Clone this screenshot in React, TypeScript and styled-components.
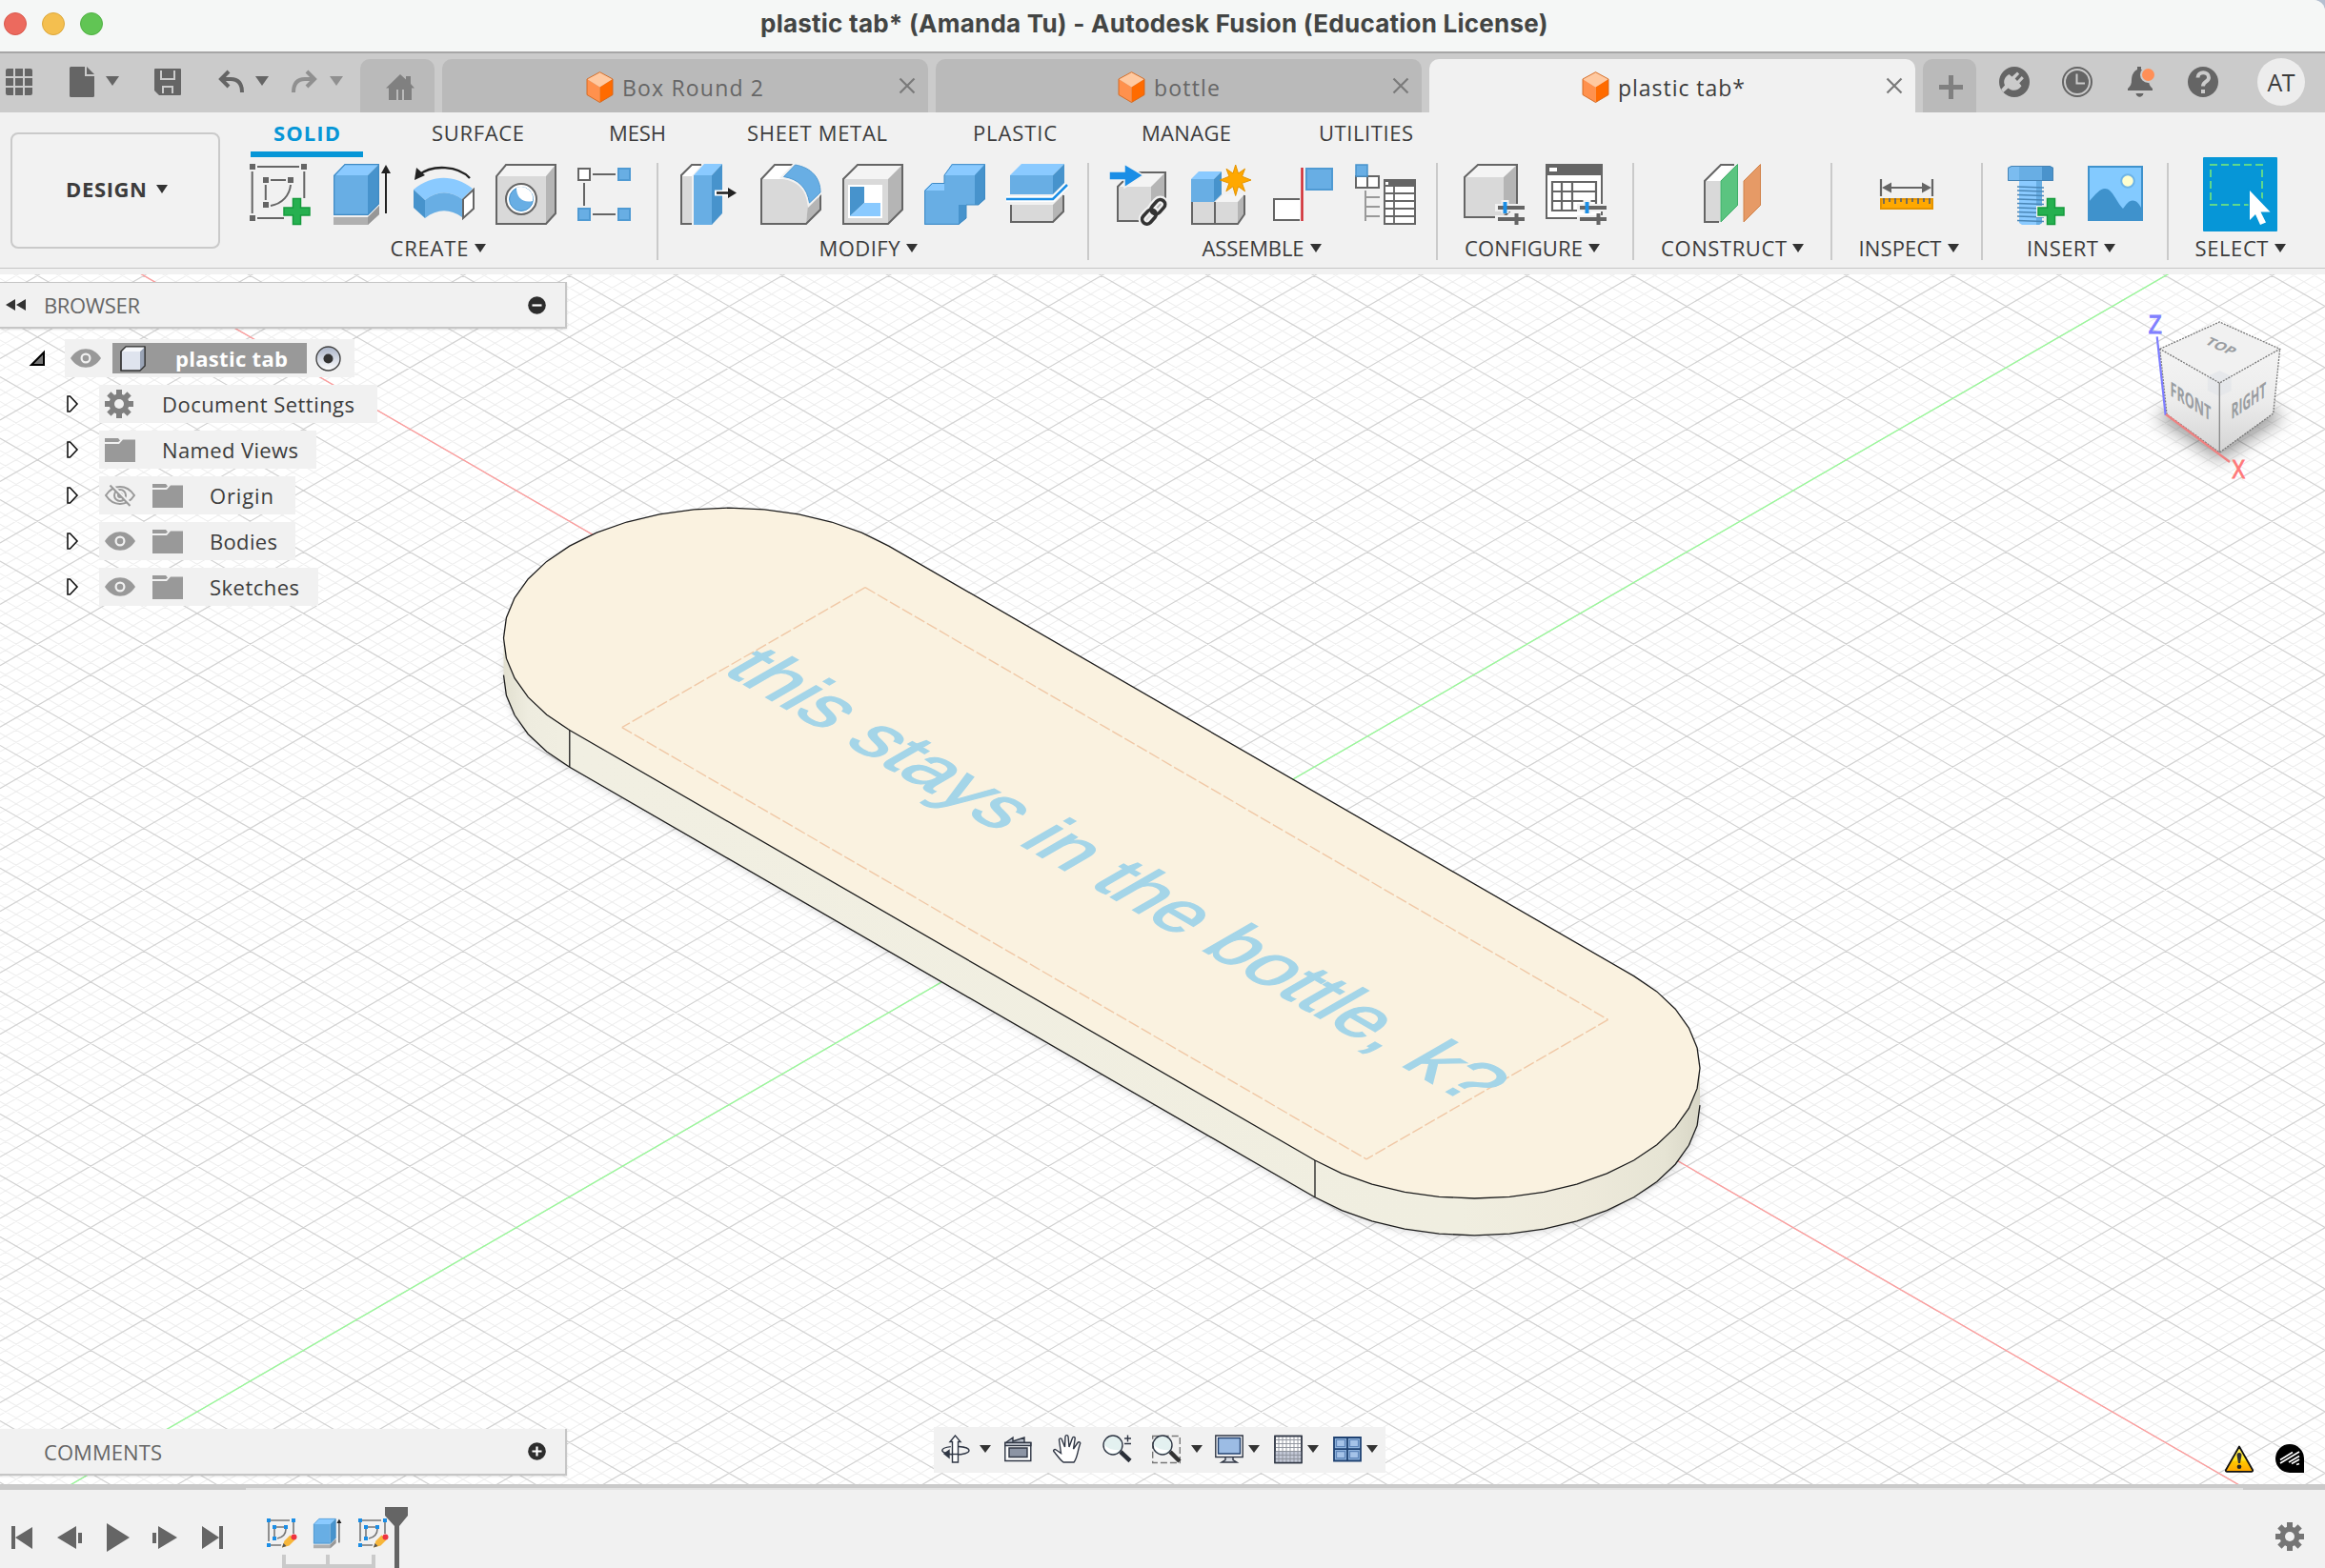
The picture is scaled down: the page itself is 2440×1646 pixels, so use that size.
import React, { useLayoutEffect, useRef, useState } from "react";
import styled, { createGlobalStyle, css } from "styled-components";

const UI_FONT = '"Open Sans", "Noto Sans", sans-serif';

const GlobalStyle = createGlobalStyle`
  * { box-sizing: border-box; }
  html, body { margin: 0; padding: 0; }
  body { background: #b4bfd0; font-family: ${UI_FONT}; color: #3c3c3c; overflow: hidden; }
  svg { display: block; flex: none; overflow: visible; }
`;

/* ---------- text ---------- */

const TextBox = styled.span<{ $w: number; $size?: number; $weight?: number; $color?: string; $font?: string }>`
  display: block;
  flex: none;
  width: ${(p) => p.$w}px;
  white-space: pre;
  font-family: ${(p) => p.$font ?? UI_FONT};
  font-size: ${(p) => p.$size ?? 22}px;
  font-weight: ${(p) => p.$weight ?? 400};
  color: ${(p) => p.$color ?? "#3c3c3c"};
  line-height: 26px;
`;

interface LabelProps {
  children: string;
  w: number;
  size?: number;
  weight?: number;
  color?: string;
  font?: string;
}

/* A label whose tracking is adjusted so that it fills its column. */
function Label({ children, w, size, weight, color, font }: LabelProps) {
  const inner = useRef<HTMLSpanElement>(null);
  const [tracking, setTracking] = useState(0);
  useLayoutEffect(() => {
    if (!inner.current || children.length < 2) return;
    const natural = inner.current.getBoundingClientRect().width;
    setTracking((w - natural) / (children.length - 1));
  }, []);
  return (
    <TextBox $w={w} $size={size} $weight={weight} $color={color} $font={font}>
      <span ref={inner} style={{ letterSpacing: `${tracking}px` }}>
        {children}
      </span>
    </TextBox>
  );
}

/* ---------- window frame ---------- */

const Window = styled.div`
  display: flex;
  flex-direction: column;
  width: 2440px;
  height: 1646px;
  border-top-right-radius: 12px;
  overflow: hidden;
  background: #f1f1f1;
`;

const TitleBar = styled.header`
  display: flex;
  align-items: center;
  height: 56px;
  flex: none;
  padding: 0 0 4px 4px;
  background: #f5f7f6;
  border-bottom: 2px solid #a6a6a6;
`;

const Lights = styled.div`
  display: flex;
  gap: 16px;
  width: 794px;
`;

const Light = styled.i<{ $c: string; $edge: string }>`
  width: 24px;
  height: 24px;
  border-radius: 50%;
  background: ${(p) => p.$c};
  border: 1px solid ${(p) => p.$edge};
`;

/* ---------- document tab bar ---------- */

const TabBar = styled.nav`
  display: flex;
  align-items: flex-end;
  height: 62px;
  flex: none;
  background: #cbcbcb;
`;

const QuickTools = styled.div`
  display: flex;
  align-items: center;
  height: 62px;
  width: 378px;
  flex: none;
  padding-bottom: 2px;
`;

const Push = styled.div<{ $ml?: number; $mt?: number }>`
  flex: none;
  margin-left: ${(p) => p.$ml ?? 0}px;
  margin-top: ${(p) => p.$mt ?? 0}px;
`;

const Caret = styled.i<{ $w?: number; $h?: number; $c?: string }>`
  display: block;
  flex: none;
  width: 0;
  height: 0;
  border-left: ${(p) => (p.$w ?? 12) / 2}px solid transparent;
  border-right: ${(p) => (p.$w ?? 12) / 2}px solid transparent;
  border-top: ${(p) => p.$h ?? 9}px solid ${(p) => p.$c ?? "#333"};
`;

const DocTab = styled.div<{ $w: number; $ml?: number; $active?: boolean; $pad?: number }>`
  display: flex;
  align-items: center;
  width: ${(p) => p.$w}px;
  height: 56px;
  margin-left: ${(p) => p.$ml ?? 0}px;
  padding-top: 3px;
  padding-left: ${(p) => p.$pad ?? 0}px;
  border-radius: 10px 10px 0 0;
  background: ${(p) => (p.$active ? "#f1f1f1" : "#bababa")};
`;

const StatusTools = styled.div`
  display: flex;
  align-items: center;
  height: 62px;
  padding-bottom: 2px;
  padding-left: 24px;
  gap: 34px;
`;

const Avatar = styled.div`
  display: flex;
  justify-content: center;
  align-items: center;
  width: 50px;
  height: 50px;
  margin-left: 7px;
  border-radius: 50%;
  background: #ededed;
`;

/* ---------- ribbon ---------- */

const Ribbon = styled.section`
  display: flex;
  height: 170px;
  flex: none;
  background: #f1f1f1;
`;

const RibbonFrame = styled.div`
  display: flex;
  width: 2440px;
  height: 164px;
  border-bottom: 1px solid #c6c6c6;
`;

const Workspace = styled.button`
  display: flex;
  align-items: center;
  width: 220px;
  height: 122px;
  margin: 21px 11px 0 11px;
  padding: 0 0 4px 56px;
  gap: 10px;
  border: 2px solid #cacaca;
  border-radius: 8px;
  background: #f2f2f2;
`;

const RibbonMain = styled.div`
  display: flex;
  flex-direction: column;
`;

const RibbonTabs = styled.div`
  display: flex;
  height: 47px;
`;

const RibbonTab = styled.div<{ $ml: number; $on?: boolean }>`
  display: flex;
  padding-top: 8px;
  margin-left: ${(p) => p.$ml}px;
  ${(p) =>
    p.$on &&
    css`
      padding: 8px 24px 0;
      border-bottom: 6px solid #0696d7;
    `}
`;

const Groups = styled.div`
  display: flex;
  margin-top: 6px;
`;

const Group = styled.div<{ $w: number; $last?: boolean }>`
  display: flex;
  flex-direction: column;
  align-items: center;
  width: ${(p) => p.$w}px;
  height: 102px;
  padding-top: 1px;
  border-right: ${(p) => (p.$last ? "0" : "2px solid #cacaca")};
`;

const IconRow = styled.div`
  display: flex;
  align-items: center;
  gap: 22px;
  height: 64px;
`;

const GroupLabel = styled.div<{ $nudge: number }>`
  display: flex;
  align-items: center;
  gap: 6px;
  margin-top: 11px;
  margin-left: ${(p) => p.$nudge * 2}px;
`;

/* ---------- canvas ---------- */

const Canvas = styled.main`
  position: relative;
  height: 1270px;
  flex: none;
  background: #fff;
  overflow: hidden;
`;

const Panel = styled.div<{ $top: number; $line?: boolean }>`
  position: absolute;
  left: 0;
  top: ${(p) => p.$top}px;
  display: flex;
  align-items: center;
  width: 595px;
  height: 49px;
  padding: 0 20px 0 6px;
  background: #f1f1f1;
  border-right: 2px solid #c6c6c6;
  border-bottom: 2px solid #c6c6c6;
  border-top: ${(p) => (p.$line ? "1px solid #c6c6c6" : "0")};
  box-shadow: 0 1px 2px rgba(0, 0, 0, 0.12);
`;

const PanelTitle = styled.div<{ $pl: number }>`
  flex: 1;
  padding-left: ${(p) => p.$pl}px;
`;

const Tree = styled.div`
  position: absolute;
  left: 0;
  top: 68px;
  display: flex;
  flex-direction: column;
  gap: 8px;
`;

const TreeRow = styled.div<{ $pl: number }>`
  display: flex;
  align-items: center;
  height: 40px;
  padding-left: ${(p) => p.$pl}px;
`;

const TreeCell = styled.div<{ $w: number; $ml: number }>`
  display: flex;
  align-items: center;
  width: ${(p) => p.$w}px;
  height: 40px;
  margin-left: ${(p) => p.$ml}px;
  padding-left: 6px;
  background: #f1f1f1;
`;

const Selected = styled.div`
  display: flex;
  align-items: center;
  width: 204px;
  height: 32px;
  margin: 0 9px 0 12px;
  padding-left: 8px;
  gap: 31px;
  background: #999;
`;

const NavBar = styled.div`
  position: absolute;
  left: 980px;
  top: 1210px;
  display: flex;
  align-items: center;
  width: 474px;
  height: 48px;
  padding: 0 0 2px 8px;
  background: #f1f1f1;
`;

const Status = styled.div`
  position: absolute;
  right: 22px;
  bottom: 12px;
  display: flex;
  align-items: flex-end;
  gap: 22px;
`;

/* ---------- timeline ---------- */

const Timeline = styled.footer`
  display: flex;
  height: 88px;
  flex: none;
  padding: 0 22px 0 12px;
  border-top: 4px solid #cacaca;
  justify-content: space-between;
  background: linear-gradient(90deg, #cacaca 258px, #e2e2e2 258px, #e2e2e2 2354px, #cacaca 2354px) 0 0 / 100% 2px no-repeat #f1f1f1;
`;

const Transport = styled.div<{ $h: number }>`
  display: flex;
  align-items: center;
  height: ${(p) => p.$h}px;
`;

/* ---------- icons ---------- */

const BLUE = "#68aee4";
const BLUE_TOP = "#8acaff";
const BLUE_SIDE = "#4793cc";
const INK = "#656565";
const GREY = "#d9d9d9";
const GREY_SIDE = "#b5b5b5";

const Tool = ({ children }: { children: React.ReactNode }) => (
  <svg width="64" height="64" viewBox="0 0 64 64" fill="none">
    {children}
  </svg>
);

const Plus = () => (
  <path d="M45.500 36.500h8v9.500h9.500v8h-9.500v9.500h-8v-9.500h-9.500v-8h9.500z" fill="#26b050" stroke="#159a3c" strokeWidth="1.500" />
);

const GreyCube = ({ x0 = 1, y0 = 13, x1 = 53, yb = 63, xr = 63, yt = 1, ys = 52 }) => (
  <>
    <path d={`M${x0} ${yb}V${y0}H${x1}V${yb}z`} fill={GREY} />
    <path d={`M${x0} ${y0}L${x0 + xr - x1} ${yt}H${xr}L${x1} ${y0}z`} fill="#f4f4f4" />
    <path d={`M${x1} ${y0}L${xr} ${yt}V${ys}L${x1} ${yb}z`} fill={GREY_SIDE} />
    <path d={`M${x0} ${yb}V${y0}L${x0 + xr - x1} ${yt}H${xr}V${ys}L${x1} ${yb}z`} stroke={INK} strokeWidth="2" />
  </>
);

const SketchIcon = () => (
  <Tool>
    <path d="M8 3h44M2.700 8v44M57.300 8v28M8 57h28M22 17h16M16.800 22v16M43 22c-1 11-9 20-21 22" stroke={INK} strokeWidth="2" />
    <path d="M0 0h6v6H0zM54 0h6v6h-6zM0 54h6v6H0zM14 14h6v6h-6zM40 14h6v6h-6zM14 40h6v6h-6z" fill={INK} />
    <Plus />
  </Tool>
);

const ExtrudeBody = () => (
  <>
    <path d="M2 56h36l12-12v9L38 64H2z" fill="#b0b0b0" />
    <path d="M38 56l12-12v9L38 64z" fill="#979797" />
    <path d="M2 12h36v42H2z" fill={BLUE} />
    <path d="M2 12L14 0h36L38 12z" fill={BLUE_TOP} />
    <path d="M38 12L50 0v42L38 54z" fill={BLUE_SIDE} />
    <path d="M2.700 12.500L14 .7h35.300V42L38 53.300H2.700z" stroke="#3f8ac4" strokeWidth="1.200" />
    <path d="M57 8v44" stroke="#222" strokeWidth="2" />
    <path d="M52 10l5-9 5 9z" fill="#222" />
  </>
);

const ExtrudeIcon = () => (
  <Tool>
    <ExtrudeBody />
  </Tool>
);

const RevolveIcon = () => (
  <Tool>
    <path d="M59 15C47 2 20 0 5 12" stroke="#222" strokeWidth="2.400" />
    <path d="M1 17L3 4l9 8z" fill="#222" />
    <path d="M52 37L63 27v20L52 57z" fill="#fff" stroke={INK} strokeWidth="2" />
    <path d="M0 27c20-16 42-16 62-1L51 37c-13-9-26-9-39 1z" fill={BLUE_TOP} />
    <path d="M12 38c13-10 26-10 39-1v19c-13-9-26-9-39 1z" fill={BLUE} />
    <path d="M0 27l12 11v19L0 46z" fill={BLUE_SIDE} />
  </Tool>
);

const HoleIcon = () => (
  <Tool>
    <GreyCube />
    <circle cx="27" cy="37" r="16" fill="#fff" stroke={INK} strokeWidth="2" />
    <circle cx="27" cy="37" r="12.500" fill={BLUE} stroke="#4793cc" />
    <path d="M22 25.500c0 10 7 16 17 13.500a12.500 12.500 0 0 0-17-14z" fill="#fff" />
  </Tool>
);

const PatternIcon = () => (
  <Tool>
    <path d="M16 11h24M7 20v24M16 53h24" stroke={INK} strokeWidth="2" />
    <path d="M1 5h12v12H1z" fill="#fff" stroke={INK} strokeWidth="2" />
    <path d="M43 5h12v12H43zM1 47h12v12H1zM43 47h12v12H43z" fill={BLUE} stroke="#4f9ad3" strokeWidth="2" />
  </Tool>
);

const PressPullIcon = () => (
  <Tool>
    <path d="M3 13h11v50H3z" fill={GREY} />
    <path d="M3 13L14 1h10L14 13z" fill="#fff" />
    <path d="M14 63H3V12L14 1h10" stroke={INK} strokeWidth="2" />
    <path d="M16 12h19v52H16z" fill={BLUE} />
    <path d="M16 12L27 0h19L35 12z" fill={BLUE_TOP} />
    <path d="M35 12L46 0v52L35 64z" fill={BLUE_SIDE} />
    <path d="M38 30.500h16" stroke="#fff" strokeWidth="6" />
    <path d="M40 30.500h14" stroke="#222" strokeWidth="2.600" />
    <path d="M52 25l9 5.500-9 5.500z" fill="#222" />
  </Tool>
);

const FilletIcon = () => (
  <Tool>
    <path d="M1 63V16h22c16 2 26 12 27 27l-2 20z" fill={GREY} />
    <path d="M1 16L15 1h19l-9 15z" fill="#fff" />
    <path d="M50 42l13-8v14L48 63z" fill={GREY_SIDE} />
    <path d="M34 1H15L1 16v47h47l15-15V32" stroke={INK} strokeWidth="2" />
    <path d="M23 14L36 0c18 3 28 14 28 30L51 43C49 25 39 16 23 14z" fill={BLUE} stroke="#f1f1f1" strokeWidth="3" />
    <path d="M24.500 13.500L36.500 1C54 4 63 15 63 30L51.500 41C49 25 40 16 24.500 13.500z" fill={BLUE} stroke="#4f9ad3" />
  </Tool>
);

const ShellIcon = () => (
  <Tool>
    <GreyCube y0={16} x1={48} ys={48} />
    <path d="M6 22h36v35H6z" fill="#fff" />
    <path d="M8 24h15v17L8 55z" fill="#4793cc" />
    <path d="M23 41h17v14H8z" fill={BLUE_TOP} />
  </Tool>
);

const CombineIcon = () => (
  <Tool>
    <path d="M0 28l8-8h13V12L29 0h35v37l-7 6H44v14l-8 7H0z" fill={BLUE} />
    <path d="M0 28l8-8h13v8zM21 12L29 0h35L53 12z" fill={BLUE_TOP} />
    <path d="M53 12L64 0v37l-7 6h-4zM36 43h8v14l-8 7z" fill={BLUE_SIDE} />
    <path d="M.7 28.300L8.500 20.500H21V12L29.300.7h34v36L57 43H44v14l-8 6.300H.7z" stroke="#3f8ac4" />
  </Tool>
);

const SplitIcon = () => (
  <Tool>
    <path d="M4 43h45v18H4z" fill={GREY} />
    <path d="M49 43l11-11v17L49 61z" fill={GREY_SIDE} />
    <path d="M5 43v18h44l11-11V33" stroke={INK} strokeWidth="2" />
    <path d="M4 12h45v20H4z" fill={BLUE} />
    <path d="M4 12L16 0h45L49 12z" fill={BLUE_TOP} />
    <path d="M49 12L61 0v20L49 32z" fill={BLUE_SIDE} />
    <path d="M0 37h49l15-15" stroke="#fff" strokeWidth="6" />
    <path d="M0 37h49l15-15" stroke="#1b8ee6" strokeWidth="2.600" />
  </Tool>
);

const InsertComponentIcon = () => (
  <Tool>
    <GreyCube x0={9} y0={24} x1={44} yb={60} xr={59} yt={9} ys={45} />
    <path d="M0 8h16V0l20 12-20 13v-8H0z" fill="#1b8ee6" stroke="#f1f1f1" strokeWidth="1.500" />
    <g transform="rotate(-48 47 50)" fill="none">
      <g stroke="#f1f1f1" strokeWidth="8">
        <rect x="31" y="45" width="17" height="10" rx="5" />
        <rect x="45" y="45" width="17" height="10" rx="5" />
      </g>
      <g stroke="#333" strokeWidth="3.600">
        <rect x="31" y="45" width="17" height="10" rx="5" />
        <rect x="45" y="45" width="17" height="10" rx="5" />
      </g>
    </g>
  </Tool>
);

const NewComponentIcon = () => (
  <Tool>
    <path d="M25 40l8-8h23v20L49 63z" fill={GREY_SIDE} />
    <path d="M25 40l8-8h23l-7 8z" fill="#f4f4f4" />
    <path d="M1 40h48v23H1z" fill={GREY} />
    <path d="M1 40v23h48l7-10V33M25 40v23" stroke={INK} strokeWidth="2" />
    <path d="M0 16h24v24H0z" fill={BLUE} />
    <path d="M0 16l8-8h24l-8 8z" fill={BLUE_TOP} />
    <path d="M24 16l8-8v24l-8 8z" fill={BLUE_SIDE} />
    <path
      d="M46.700 1l2.800 9 7-4.800-3 8L63 17l-9.500 3.300 3 8.500-7-5-2.800 9.700-2.800-9.700-7 5 3-8.500L30.500 17l9.500-3.800-3-8 7 4.800z"
      fill="#ffa800"
      stroke="#e59400"
    />
  </Tool>
);

const JointIcon = () => (
  <Tool>
    <path d="M28 37H1v22h27" fill="#fff" stroke={INK} strokeWidth="2" />
    <path d="M30.500 4v56" stroke="#d0252c" strokeWidth="2.400" />
    <path d="M35 5h27v22H35z" fill={BLUE} stroke="#4f9ad3" strokeWidth="2" />
  </Tool>
);

const BomIcon = () => (
  <Tool>
    <path d="M1 13h24v12H1zM13 13v12" fill="#fff" stroke={INK} strokeWidth="2" />
    <path d="M1 1h12v12H1z" fill={BLUE} stroke="#4793cc" strokeWidth="1.500" />
    <path d="M11 28v32M11 35h15M11 45h15M11 55h15" stroke="#999" strokeWidth="2" />
    <path d="M31 17h32v46H31z" fill="#fff" stroke={INK} strokeWidth="2" />
    <path d="M30 16h34v8H30z" fill={INK} />
    <path d="M31 31h32M31 39h32M31 47h32M31 55h32M41 24v38" stroke={INK} strokeWidth="1.800" />
    <path d="M32 19h3v3h-3z" fill="#fff" />
  </Tool>
);

const Sliders = () => (
  <>
    <path d="M33 46h31M33 58h31M43.500 38v14" stroke="#f1f1f1" strokeWidth="8" />
    <path d="M36 46h28M36 58h28M55.500 52v12" stroke={INK} strokeWidth="4" />
    <path d="M43.500 40v12" stroke="#1b8ee6" strokeWidth="4" />
  </>
);

const ConfigureIcon = () => (
  <Tool>
    <GreyCube y0={14} x1={42} xr={56} yb={56} ys={42} />
    <Sliders />
  </Tool>
);

const ConfigTableIcon = () => (
  <Tool>
    <path d="M1 1h58v56H1z" fill="#fff" stroke={INK} strokeWidth="2" />
    <path d="M0 0h60v12H0z" fill={INK} />
    <path d="M4 4h8v4H4z" fill="#fff" />
    <path d="M7 19h46v30H7zM7 29h46M7 39h46M17 19v30M28 19v30" stroke={INK} strokeWidth="2.200" />
    <Sliders />
  </Tool>
);

const ConstructIcon = () => (
  <Tool>
    <path d="M3 18h16v43H3z" fill={GREY} />
    <path d="M3 18L20 1h14L19 18z" fill="#fff" />
    <path d="M18 61H3V18L20 1h14" stroke={INK} strokeWidth="2" />
    <path d="M20 18L37.500.5v43L20 61z" fill="#5bc480" stroke="#3fae68" />
    <path d="M44 18L61.500.5v43L44 61z" fill="#e69a66" stroke="#d0824a" />
  </Tool>
);

const InspectIcon = () => (
  <Tool>
    <path d="M5 16v18M59 16v18M9 25h46" stroke={INK} strokeWidth="2.200" />
    <path d="M6 25l10-5.500v11zM58 25l-10-5.500v11z" fill={INK} />
    <path d="M5 37h54v10H5z" fill="#ffa800" stroke="#e59400" strokeWidth="2" />
    <path d="M8 36v6M14 36v4M20 36v6M26 36v4M32 36v6M38 36v4M44 36v6M50 36v4M56 36v6" stroke={INK} strokeWidth="1.800" />
  </Tool>
);

const BoltIcon = () => (
  <Tool>
    <path d="M16 18h24v44l-3 2H19l-3-2z" fill={BLUE_TOP} />
    <path d="M34 18h6v44l-3 2h-3z" fill={BLUE} />
    <path d="M14 24l28 1M14 28l28 1M14 32.500l28 1M14 37l28 1M14 41.500l28 1M14 46l28 1M14 50.500l28 1M14 55l28 1M14 59.500l28 1" stroke="#4a87b8" strokeWidth="1.700" />
    <path d="M4 4l4-2h40l4 2v14H4z" fill={BLUE} />
    <path d="M40 2h8l4 2v14H40z" fill="#4a93cc" />
    <path d="M4 4l4-2h8v16H4z" fill="#7bbcf0" />
    <path d="M4.500 4.500L8 2.500h40l3.500 2v13H4.500z" stroke="#4683b4" />
    <path d="M34 44h9v-9h13v9h8v12h-8v8H43v-8h-9z" fill="#f1f1f1" />
    <Plus />
  </Tool>
);

const PictureIcon = () => (
  <Tool>
    <path d="M3 3h56v56H3z" fill="#83caff" />
    <path d="M3 40c8-9 12-14 17-14 8 0 12 14 19 21 4-5 6-8.500 10-8.500 5 0 7 4 10 9V59H3z" fill="#3f92cc" />
    <circle cx="44" cy="18" r="6.800" fill="#ffffd0" stroke="#6db4e8" strokeWidth="2" />
    <path d="M3 3h56v56H3z" stroke="#3f92cc" strokeWidth="2" />
  </Tool>
);

const SelectIcon = () => (
  <svg width="78" height="78" viewBox="0 0 78 78" fill="none">
    <rect width="78" height="78" rx="1" fill="#0696d7" />
    <rect x="8" y="8" width="54" height="42" stroke="#5fd88c" strokeWidth="2" strokeDasharray="8 4" strokeDashoffset="1" />
    <path d="M46 32l20 14v12l-17 8z" fill="#0696d7" />
    <path d="M49 35l21.500 22.500H60.500l5.500 11-6 2.500-5-11-6 6z" fill="#fff" />
  </svg>
);

const DocCube = () => (
  <svg width="29" height="33" viewBox="0 0 29 33">
    <path d="M14.500.5L28 8 14.500 16.500 1 8z" fill="#ffc9a0" />
    <path d="M1 8l13.500 8.500v16L1 24.500z" fill="#ff914d" />
    <path d="M28 8l-13.500 8.500v16L28 24.500z" fill="#ff6b00" />
    <path d="M14.500.7L28 8v16.500l-13.500 8L1 24.500V8z" fill="none" stroke="#d2651c" strokeWidth=".9" />
  </svg>
);

const Close = () => (
  <svg width="18" height="16" viewBox="0 0 18 16">
    <path d="M1.500.5l15 15M16.500.5l-15 15" stroke="#7a7a7a" strokeWidth="2.200" />
  </svg>
);

const GearIcon = ({ size = 30, color = "#808080" }) => (
  <svg width={size} height={size} viewBox="-15 -15 30 30">
    <g fill={color}>
      {[0, 45, 90, 135].map((a) => (
        <rect key={a} x="-3" y="-15" width="6" height="30" transform={`rotate(${a})`} />
      ))}
      <circle r="10.500" />
    </g>
    <circle r="5" fill="#f1f1f1" />
  </svg>
);

const EyeIcon = () => (
  <svg width="32" height="20" viewBox="0 0 32 20">
    <path d="M0 10C8-3 24-3 32 10 24 23 8 23 0 10z" fill="#999" />
    <circle cx="16" cy="10" r="4.400" fill="none" stroke="#f1f1f1" strokeWidth="2.200" />
  </svg>
);

const EyeOffIcon = () => (
  <svg width="32" height="24" viewBox="0 -2 32 24" fill="none" stroke="#999" strokeWidth="2">
    <path d="M1 10C9-2 23-2 31 10 23 22 9 22 1 10z" />
    <circle cx="16" cy="10" r="6" />
    <circle cx="16" cy="10" r="2" />
    <path d="M7 -1l21 21" stroke="#f1f1f1" strokeWidth="3" />
    <path d="M5.500 -.5L26.500 21" />
  </svg>
);

const FolderIcon = () => (
  <svg width="32" height="26" viewBox="0 0 32 26">
    <path d="M0 1h14l2 2.500-2 1.500H0zM0 7h15l4-4.500h13V26H0z" fill="#999" />
  </svg>
);

const ArrowIcon = () => (
  <svg width="12" height="18" viewBox="0 0 12 18">
    <path d="M1 1h2.500L11 9l-7.500 8H1z" fill="#fff" stroke="#111" strokeWidth="1.600" />
  </svg>
);

/* ---------- model view ---------- */

const STEP = 111.667;
const SLOPE = 0.57735;
const ORIGIN = { x: 1211.8, y: 613.8 };

function gridLines(divisions: number, skip: number) {
  const out: string[] = [];
  const gap = (STEP * SLOPE) / divisions;
  const reach = Math.ceil(2100 / gap);
  for (let i = -reach; i <= reach; i++) {
    if (skip && i % skip === 0) continue;
    const y = ORIGIN.y + i * gap;
    const left = -ORIGIN.x * SLOPE;
    const right = (2440 - ORIGIN.x) * SLOPE;
    out.push(`M0 ${(y + left).toFixed(1)}L2440 ${(y + right).toFixed(1)}M0 ${(y - left).toFixed(1)}L2440 ${(y - right).toFixed(1)}`);
  }
  return out.join("");
}

const RX = 236.7;
const RY = 136.7;
const THICK = 38.8;
const CAP_A = { x: 765.2, y: 381.8 };
const CAP_B = { x: 1547.3, y: 833.3 };

function arc(c: { x: number; y: number }, from: number, to: number, dy = 0) {
  const pts: string[] = [];
  const dir = to > from ? 9 : -9;
  for (let t = from; dir > 0 ? t <= to : t >= to; t += dir) {
    const r = (t * Math.PI) / 180;
    pts.push(`${(c.x + RX * Math.cos(r)).toFixed(1)} ${(c.y + RY * Math.sin(r) + dy).toFixed(1)}`);
  }
  return pts.join("L");
}

const TOP_FACE = `M${arc(CAP_B, -45, 135)}L${arc(CAP_A, 135, 315)}z`;
const SIDE = `M${arc(CAP_B, 0, 135, THICK)}L${arc(CAP_A, 135, 180, THICK)}L${arc(CAP_A, 180, 135)}L${arc(CAP_B, 135, 0)}z`;
const SIDE_EDGE = `M${arc(CAP_B, 0, 135, THICK)}L${arc(CAP_A, 135, 180, THICK)}`;

const Scene = () => (
  <svg width="2440" height="1270" viewBox="0 0 2440 1270">
    <defs>
      <linearGradient id="side" gradientUnits="userSpaceOnUse" x1="529" x2="1784" y1="0" y2="0">
        <stop offset="0" stopColor="#e2e0d0" />
        <stop offset=".02" stopColor="#eeecdf" />
        <stop offset=".06" stopColor="#f1efe2" />
        <stop offset=".8" stopColor="#f0eee0" />
        <stop offset=".9" stopColor="#eeeadb" />
        <stop offset=".97" stopColor="#e6e4d4" />
        <stop offset="1" stopColor="#d8d6c6" />
      </linearGradient>
      <linearGradient id="cubeFace" x1="0" x2="0" y1="0" y2="1">
        <stop offset="0" stopColor="#f4f4f4" />
        <stop offset=".5" stopColor="#ececec" />
        <stop offset="1" stopColor="#d4d4d4" />
      </linearGradient>
      <filter id="soft" x="-20%" y="-20%" width="140%" height="140%">
        <feGaussianBlur stdDeviation="4" />
      </filter>
      <filter id="softer" x="-60%" y="-60%" width="220%" height="220%">
        <feGaussianBlur stdDeviation="9" />
      </filter>
    </defs>
    <path d={gridLines(5, 5)} stroke="#efefef" strokeWidth="1.100" fill="none" />
    <path d={gridLines(1, 0)} stroke="#d2d2d2" strokeWidth="1.200" fill="none" />
    <path d={`M0 ${ORIGIN.y - ORIGIN.x * SLOPE}L2440 ${ORIGIN.y + (2440 - ORIGIN.x) * SLOPE}`} stroke="#ff9c9c" strokeWidth="1.300" />
    <path d={`M0 ${ORIGIN.y + ORIGIN.x * SLOPE}L2440 ${ORIGIN.y - (2440 - ORIGIN.x) * SLOPE}`} stroke="#98fb98" strokeWidth="1.300" />

    <path d={SIDE} fill="#000" opacity=".16" filter="url(#soft)" transform="translate(1 2)" />
    <path d={SIDE} fill="url(#side)" />
    <path d={SIDE_EDGE} fill="none" stroke="#1c1c1c" strokeWidth="1.300" />
    <path d={TOP_FACE} fill="#faf2e0" stroke="#1c1c1c" strokeWidth="1.300" />
    <path d="M597.800 478.400v38.800M1380 930v38.800" stroke="#1c1c1c" strokeWidth="1.300" />
    <path d="M908 328.700L652.700 475.600M908 328.700L1687.600 782.300M652.700 475.600L1434 928.800M1687.600 782.300L1434 928.800" stroke="#f0c8a6" strokeWidth="1.400" strokeDasharray="12 3" fill="none" />
    <text
      transform="matrix(.866 .502 -.866 .5 756.300 416.600)"
      fontFamily='"Liberation Sans", Arial, sans-serif'
      fontSize="80.800"
      fill="#a4d5e8"
      stroke="#a4d5e8"
      strokeWidth="1.600"
    >
      this stays in the bottle, k?
    </text>

    <path d="M2262 150l67 46 68-46-20-14h-90z" fill="#000" opacity=".38" filter="url(#softer)" />
    <path d="M2266.700 78.300l62.600-28.300 63.400 28.300-63.400 35.700z" fill="#f1f1f1" />
    <path d="M2266.700 78.300l62.600 35.700v73l-55.300-40z" fill="url(#cubeFace)" />
    <path d="M2392.700 78.300l-63.400 35.700v73l56.400-41z" fill="url(#cubeFace)" />
    <path d="M2329.300 101l12.500 6v15l-12.500 6-12.500-6v-15z" fill="#dfe3e8" opacity=".6" />
    <path d="M2266.700 78.300l62.600-28.300 63.400 28.300-63.400 35.700zM2266.700 78.300l7.300 68.700 55.300 40 56.400-41 7-67.700" fill="none" stroke="#777" strokeWidth="1.300" strokeDasharray="2 1.200" />
    <path d="M2329.300 114v73" stroke="#888" strokeWidth="1.300" />
    <path d="M2263.700 65.300l9 82.700" stroke="#7c7cff" strokeWidth="2.200" />
    <path d="M2273 147l67 50" stroke="#f08080" strokeWidth="2.200" />
    <g fill="#9a9da1" fontFamily={UI_FONT} fontWeight="700" fontSize="20">
      <text transform="matrix(.63 .4 0 1.05 2277.500 127)">FRONT</text>
      <text transform="matrix(.6 -.4 0 1.1 2341.500 152.500)">RIGHT</text>
      <text transform="matrix(.72 .32 -.5 .48 2313 72.500)">TOP</text>
    </g>
    <g fontFamily='"Liberation Sans", Arial, sans-serif' fontSize="28" textAnchor="middle" strokeWidth="1">
      <text x="2261.700" y="62" fill="#8080ff" stroke="#8080ff" textLength="14" lengthAdjust="spacingAndGlyphs">Z</text>
      <text x="2349.300" y="213.500" fill="#ff7878" stroke="#ff7878" textLength="14" lengthAdjust="spacingAndGlyphs">X</text>
    </g>
  </svg>
);

/* ---------- navigation icons ---------- */

const Nav = ({ children }: { children: React.ReactNode }) => (
  <svg width="30" height="30" viewBox="0 0 30 30" fill="none" stroke="#2f3644" strokeWidth="1.400">
    {children}
  </svg>
);

const NavIcons = () => (
  <NavBar>
    <Nav>
      <path d="M18 12.500c6 .3 11 2 11 4.200 0 2.500-6 4.300-14 4.300S.8 19 .8 16.600c0-2 4-3.500 9-4" />
      <path d="M14.500 1L9 7.500h2.500V29h6V7.500H20z" fill="#fff" />
      <path d="M3 20l5-3.500V24z" fill="#2f3644" />
      <path d="M8 20.500h9" />
    </Nav>
    <Push $ml={10}><Caret $h={8} /></Push>
    <Push $ml={14}>
      <Nav>
        <path d="M2 8L9 3v4l12-4v5" fill="#b7bdc8" />
        <path d="M.8 8.500h27v19H.8z" fill="#fff" />
        <path d="M.8 8.500h27v3H.8z" fill="#d8dce4" />
        <path d="M5 14h19v9.500H5z" fill="#8c94a4" />
      </Nav>
    </Push>
    <Push $ml={21}>
      <Nav>
        <path
          d="M11 29C8 27 3 20 .8 17.500c-.6-1.500 1-2.500 2.500-1.500L8.500 19.500 6.500 5.500c0-2 2.500-2.300 3 0L12.500 13 13 2c.2-1.800 2.800-1.800 3 0l1 11L20.500 3.500c.6-1.800 3-1.200 2.700.6L21.500 15 26 8.500c1-1.500 3.300-.5 2.500 1.300C26 16 26 24 22 29z"
          fill="#fff"
        />
      </Nav>
    </Push>
    <Push $ml={22}>
      <Nav>
        <path d="M19 18l10 9.500" stroke="#2a2f38" strokeWidth="4.500" />
        <circle cx="11" cy="11" r="10" fill="#e3f1f0" />
        <path d="M2 11a9 9 0 0 0 16 5A20 20 0 0 1 2 11z" fill="#fff" stroke="none" />
        <path d="M23 4h7M26.500.5v7M23 9.500h7" />
      </Nav>
    </Push>
    <Push $ml={22}>
      <Nav>
        <path d="M.7 1.500h28.600v28H.7z" stroke="#777" strokeDasharray="7 3" />
        <path d="M19 18l10 10" stroke="#333" strokeWidth="4.500" />
        <circle cx="11" cy="11" r="10" fill="#e3f1f0" />
        <path d="M2 11a9 9 0 0 0 16 5A20 20 0 0 1 2 11z" fill="#fff" stroke="none" />
      </Nav>
    </Push>
    <Push $ml={11}><Caret $h={8} /></Push>
    <Push $ml={13}>
      <Nav>
        <path d="M11 23h8v3.500l4 2.500H7l4-2.500z" fill="#d8dce4" />
        <path d="M.8 1h28.400v22.500H.8z" fill="#fff" />
        <path d="M3.500 3.500h23V20h-23z" fill="#9cbce4" stroke="#22406e" />
      </Nav>
    </Push>
    <Push $ml={5}><Caret $h={8} /></Push>
    <Push $ml={15}>
      <Nav>
        <path d="M1 1.500h28v28H1z" fill="#fff" />
        <path d="M1 17h28v12.500H1z" fill="#c3c8d6" stroke="none" />
        <path d="M5 1.500v28M9 1.500v28M13 1.500v28M17 1.500v28M21 1.500v28M25 1.500v28M1 5.500h28M1 9.500h28M1 13.500h28M1 17.500h28M1 21.500h28M1 25.500h28" stroke="#8b909a" strokeWidth=".9" />
        <path d="M1 1.500h28v28H1z" />
      </Nav>
    </Push>
    <Push $ml={5}><Caret $h={8} /></Push>
    <Push $ml={15}>
      <Nav>
        <path d="M1 3h28v24.500H1z" fill="#8fb3dc" stroke="#1f4272" strokeWidth="1.800" />
        <path d="M15 3v24.500M1 15.200h28" stroke="#1f4272" strokeWidth="1.800" />
        <path d="M3.500 5.500h9v7h-9zM17.500 5.500h9v7h-9zM3.500 17.700h9v7h-9zM17.500 17.700h9v7h-9z" fill="#a5c3e8" stroke="#5f86ba" strokeWidth="1.200" />
      </Nav>
    </Push>
    <Push $ml={5}><Caret $h={8} /></Push>
  </NavBar>
);

const StatusIcons = () => (
  <Status>
    <svg width="32" height="29" viewBox="0 0 32 29">
      <defs>
        <linearGradient id="warn" x1="0" x2="0" y1="0" y2="1">
          <stop offset="0" stopColor="#fff36b" />
          <stop offset=".55" stopColor="#ffe21f" />
          <stop offset=".6" stopColor="#ffc800" />
          <stop offset="1" stopColor="#ffa600" />
        </linearGradient>
      </defs>
      <path d="M16 1.500L30 26c.6 1-.1 1.800-1.200 1.800H3.200C2.100 27.800 1.400 27 2 26z" fill="url(#warn)" stroke="#111" strokeWidth="1.800" strokeLinejoin="round" />
      <path d="M16 8c-2 0-2.600 1.400-2.400 3l1.400 8h2l1.400-8c.2-1.600-.4-3-2.400-3z" fill="#333" />
      <circle cx="16" cy="22.700" r="2.300" fill="#222" />
    </svg>
    <svg width="30" height="30" viewBox="0 0 30 30">
      <path d="M15 0a15 15 0 0 1 15 15v15H15a15 15 0 0 1 0-30z" fill="#000" />
      <path d="M5 16.500l13-8M5 20l20-12M14 19l11-6.500M17 20.500l8-4.500M22 21.500l3-1" stroke="#fff" strokeWidth="1.700" />
    </svg>
  </Status>
);

const MiniSketch = () => (
  <svg width="31" height="31" viewBox="0 0 31 31" fill="none">
    <path d="M4 2h20M2 4v20M28 4v12M4 28h12M10 9h8M8 11v8M20 11c0 6-4 9-9 10" stroke="#777" strokeWidth="1.600" />
    <path d="M0 0h4v4H0zM26 0h4v4h-4zM0 26h4v4H0zM6 7h4v4H6zM18 7h4v4h-4zM6 19h4v4H6z" fill="#1b8ee6" />
    <path d="M14 31l3-9 8-7 6 6-8 7z" fill="#f1f1f1" />
    <path d="M16 30.500l2.500-7 6-6 5 5-6 6z" fill="#f7b63a" />
    <path d="M16 30.500l1.500-4.500 3 3z" fill="#555" />
    <circle cx="28.500" cy="19.500" r="3" fill="#ee3340" />
  </svg>
);

const TimelineTrack = () => (
  <svg width="160" height="84" viewBox="0 0 160 84">
    <g transform="translate(12 32)"><MiniSketch /></g>
    <g transform="translate(60 32) scale(.49)" fill="none"><ExtrudeBody /></g>
    <g transform="translate(108 32)"><MiniSketch /></g>
    <path d="M28 70h4v10h42V70h4v10h44V70h4v14H28z" fill="#cacaca" />
    <path d="M136 20h24v9l-9 11v44h-5V40l-10-11z" fill={INK} />
  </svg>
);

/* ---------- data ---------- */

const ribbonTabs: { label: string; w: number; ml: number; on?: boolean }[] = [
  { label: "SOLID", w: 70, ml: 21, on: true },
  { label: "SURFACE", w: 97, ml: 72 },
  { label: "MESH", w: 60, ml: 89 },
  { label: "SHEET METAL", w: 147, ml: 85 },
  { label: "PLASTIC", w: 88, ml: 90 },
  { label: "MANAGE", w: 94, ml: 89 },
  { label: "UTILITIES", w: 99, ml: 92 },
];

const groups: { label: string; w: number; text: number; nudge: number; icons: React.FC[] }[] = [
  { label: "CREATE", w: 449, text: 82, nudge: -6, icons: [SketchIcon, ExtrudeIcon, RevolveIcon, HoleIcon, PatternIcon] },
  { label: "MODIFY", w: 452, text: 85, nudge: -5, icons: [PressPullIcon, FilletIcon, ShellIcon, CombineIcon, SplitIcon] },
  { label: "ASSEMBLE", w: 366, text: 107, nudge: -1, icons: [InsertComponentIcon, NewComponentIcon, JointIcon, BomIcon] },
  { label: "CONFIGURE", w: 206, text: 124, nudge: -3, icons: [ConfigureIcon, ConfigTableIcon] },
  { label: "CONSTRUCT", w: 208, text: 132, nudge: 0, icons: [ConstructIcon] },
  { label: "INSPECT", w: 158, text: 87, nudge: 2, icons: [InspectIcon] },
  { label: "INSERT", w: 195, text: 75, nudge: -4, icons: [BoltIcon, PictureIcon] },
  { label: "SELECT", w: 150, text: 77, nudge: 0, icons: [SelectIcon] },
];

const folders: { label: string; w: number; text: number; eye: "on" | "off" }[] = [
  { label: "Origin", w: 206, text: 67, eye: "off" },
  { label: "Bodies", w: 206, text: 71, eye: "on" },
  { label: "Sketches", w: 230, text: 94, eye: "on" },
];

/* ---------- app ---------- */

export default function App() {
  return (
    <Window>
      <GlobalStyle />
      <TitleBar>
        <Lights>
          <Light $c="#ec6a5e" $edge="#d9574b" />
          <Light $c="#f4bf4f" $edge="#dca73a" />
          <Light $c="#61c554" $edge="#4fb142" />
        </Lights>
        <Label w={826} size={26} weight={700} color="#434544" font='Inter, "Open Sans", sans-serif'>
          plastic tab* (Amanda Tu) - Autodesk Fusion (Education License)
        </Label>
      </TitleBar>

      <TabBar>
        <QuickTools>
          <Push $ml={6}>
            <svg width="28" height="28" viewBox="0 0 28 28">
              <path d="M0 2q0-2 2-2h6v8H0zM10 0h8v8h-8zM20 0h6q2 0 2 2v6h-8zM0 10h8v8H0zM10 10h8v8h-8zM20 10h8v8h-8zM0 20h8v8H2q-2 0-2-2zM10 20h8v8h-8zM20 20h8v6q0 2-2 2h-6z" fill={INK} />
            </svg>
          </Push>
          <Push $ml={39}>
            <svg width="26" height="32" viewBox="0 0 26 32">
              <path d="M0 1.500Q0 0 1.500 0H16v10h10v20.500q0 1.500-1.500 1.500h-23Q0 32 0 30.500zM18 0l8 8h-8z" fill={INK} />
            </svg>
          </Push>
          <Push $ml={12} $mt={-3}><Caret $w={14} $h={10} $c={INK} /></Push>
          <Push $ml={37}>
            <svg width="28" height="28" viewBox="0 0 28 28">
              <path fillRule="evenodd" d="M1 0h26q1 0 1 1v26q0 1-1 1H5l-5-5V1q0-1 1-1zM6 2v10h16V2h-2v8H8V2zM8 18v8h2v-6h8v6h2v-8z" fill={INK} />
              <path d="M14 22h3v4h-3z" fill={INK} />
            </svg>
          </Push>
          <Push $ml={39} $mt={-1}>
            <svg width="27" height="24" viewBox="0 0 27 24">
              <path d="M11 1L3 9l8 8M4 9h9q12 0 12 14" fill="none" stroke={INK} strokeWidth="4" />
            </svg>
          </Push>
          <Push $ml={12} $mt={-3}><Caret $w={14} $h={10} $c={INK} /></Push>
          <Push $ml={24} $mt={-1}>
            <svg width="27" height="24" viewBox="0 0 27 24">
              <path d="M16 1l8 8-8 8M23 9h-9Q2 9 2 23" fill="none" stroke="#909090" strokeWidth="4" />
            </svg>
          </Push>
          <Push $ml={13} $mt={-3}><Caret $w={14} $h={10} $c="#909090" /></Push>
        </QuickTools>

        <DocTab $w={78} $pad={27}>
          <svg width="30" height="27" viewBox="0 0 30 27">
            <path d="M15 0l6 5.500V2h5v8l4 4.500h-3V27h-8V16h-2v11h-4V16h-2v11H3V14.500H0z" fill="#808080" />
          </svg>
        </DocTab>
        <DocTab $w={510} $ml={8} $pad={151}>
          <DocCube />
          <Push $ml={9}><Label w={148} size={23} color="#666">Box Round 2</Label></Push>
          <Push $ml={142} $mt={-4}><Close /></Push>
        </DocTab>
        <DocTab $w={510} $ml={8} $pad={191}>
          <DocCube />
          <Push $ml={9}><Label w={69} size={23} color="#666">bottle</Label></Push>
          <Push $ml={181} $mt={-4}><Close /></Push>
        </DocTab>
        <DocTab $w={510} $ml={8} $pad={160} $active>
          <DocCube />
          <Push $ml={9}><Label w={133} size={23}>plastic tab*</Label></Push>
          <Push $ml={148} $mt={-4}><Close /></Push>
        </DocTab>
        <DocTab $w={56} $ml={8} $pad={17}>
          <svg width="25" height="25" viewBox="0 0 25 25">
            <path d="M12.500 0v25M0 12.500h25" stroke="#808080" strokeWidth="5" />
          </svg>
        </DocTab>

        <StatusTools>
          <svg width="32" height="32" viewBox="0 0 32 32">
            <circle cx="16" cy="16" r="14.500" fill="none" stroke={INK} strokeWidth="3" />
            <circle cx="16" cy="16" r="14" fill={INK} />
            <path d="M10.500 8l3 2.500L19 5.500l2.200 2.200-4.600 4.800 2.400 2.400 4.700-4.800 2.200 2.200-4.700 4.900 2.300 3C20 25 14.500 26.500 9.500 22.500L4.500 27 2 24l4-4.500C4 15 6 10.500 10.500 8z" fill="#cbcbcb" />
          </svg>
          <svg width="32" height="32" viewBox="0 0 32 32">
            <circle cx="16" cy="16" r="15" fill="none" stroke={INK} strokeWidth="2" />
            <circle cx="16" cy="16" r="12" fill={INK} />
            <path d="M15.500 7.500v10H24" fill="none" stroke="#cbcbcb" strokeWidth="2" />
          </svg>
          <svg width="32" height="32" viewBox="-1 0 32 32">
            <path d="M12 0h4v3c6 1 8 6 8 11 0 4 1 6 4 9v2H2v-2c3-3 4-5 4-9 0-5 2-9 6-11zM10.500 28h8c-1 5-7 5-8 0z" fill={INK} />
            <circle cx="23.500" cy="8.500" r="7.500" fill="#ff8f57" stroke="#cbcbcb" strokeWidth="2" />
          </svg>
          <svg width="32" height="32" viewBox="0 0 32 32">
            <circle cx="16" cy="16" r="16" fill={INK} />
            <path d="M10.500 11.500c0-7 11.500-7 11.500 0 0 4.500-6 4-6 9" fill="none" stroke="#cbcbcb" strokeWidth="4" />
            <path d="M14 24h4v4h-4z" fill="#cbcbcb" />
          </svg>
          <Avatar>
            <Label w={29} size={25}>AT</Label>
          </Avatar>
        </StatusTools>
      </TabBar>

      <Ribbon>
        <RibbonFrame>
          <Workspace>
            <Label w={85} weight={700}>DESIGN</Label>
            <Caret $h={9} />
          </Workspace>
          <RibbonMain>
            <RibbonTabs>
              {ribbonTabs.map((t) => (
                <RibbonTab key={t.label} $ml={t.ml} $on={t.on}>
                  <Label w={t.w} weight={t.on ? 700 : 400} color={t.on ? "#0696d7" : undefined}>
                    {t.label}
                  </Label>
                </RibbonTab>
              ))}
            </RibbonTabs>
            <Groups>
              {groups.map((g, i) => (
                <Group key={g.label} $w={g.w} $last={i === groups.length - 1}>
                  <IconRow>
                    {g.icons.map((Icon, k) => (
                      <Icon key={k} />
                    ))}
                  </IconRow>
                  <GroupLabel $nudge={g.nudge}>
                    <Label w={g.text}>{g.label}</Label>
                    <Caret $w={12} $h={9} />
                  </GroupLabel>
                </Group>
              ))}
            </Groups>
          </RibbonMain>
        </RibbonFrame>
      </Ribbon>

      <Canvas>
        <Scene />
        <Panel $top={8} $line>
          <svg width="21" height="12" viewBox="0 0 21 12">
            <path d="M10 0v12L0 6zM21 0v12L11 6z" fill="#333" />
          </svg>
          <PanelTitle $pl={19}><Label w={101} color="#666">BROWSER</Label></PanelTitle>
          <svg width="19" height="19" viewBox="0 0 19 19">
            <circle cx="9.500" cy="9.500" r="9.300" fill="#2d2d2d" />
            <path d="M4.500 9.500h10" stroke="#fff" strokeWidth="2.200" />
          </svg>
        </Panel>

        <Tree>
          <TreeRow $pl={32}>
            <svg width="15" height="15" viewBox="0 0 15 15">
              <path d="M14 1v13H1z" fill="#777" stroke="#000" strokeWidth="2" />
            </svg>
            <TreeCell $w={304} $ml={21}>
              <EyeIcon />
              <Selected>
                <svg width="27" height="27" viewBox="0 0 27 27" stroke="#333" strokeWidth="1.200">
                  <path d="M1 6l5-5h20v20l-5 5H1z" fill="#dfe4ee" />
                  <path d="M21 6l5-5v20l-5 5z" fill="#9aa4b6" stroke="none" />
                  <path d="M1 6l5-5h20l-5 5z" fill="#f6f8fb" stroke="none" />
                  <path d="M1 6l5-5h20v20l-5 5H1z" fill="none" />
                </svg>
                <Label w={118} weight={700} color="#fff">plastic tab</Label>
              </Selected>
              <svg width="27" height="27" viewBox="0 0 27 27">
                <defs>
                  <linearGradient id="radio" x1="0" x2="0" y1="0" y2="1">
                    <stop offset="0" stopColor="#aab4c8" />
                    <stop offset="1" stopColor="#fff" />
                  </linearGradient>
                </defs>
                <circle cx="13.500" cy="13.500" r="12.500" fill="url(#radio)" stroke="#444" strokeWidth="1.400" />
                <circle cx="13.500" cy="13.500" r="5" fill="#333" />
              </svg>
            </TreeCell>
          </TreeRow>
          <TreeRow $pl={70}>
            <ArrowIcon />
            <TreeCell $w={292} $ml={22}>
              <GearIcon />
              <Push $ml={30}><Label w={202}>Document Settings</Label></Push>
            </TreeCell>
          </TreeRow>
          <TreeRow $pl={70}>
            <ArrowIcon />
            <TreeCell $w={228} $ml={22}>
              <FolderIcon />
              <Push $ml={28}><Label w={143}>Named Views</Label></Push>
            </TreeCell>
          </TreeRow>
          {folders.map((f) => (
            <TreeRow key={f.label} $pl={70}>
              <ArrowIcon />
              <TreeCell $w={f.w} $ml={22}>
                {f.eye === "on" ? <EyeIcon /> : <EyeOffIcon />}
                <Push $ml={18}><FolderIcon /></Push>
                <Push $ml={28}><Label w={f.text}>{f.label}</Label></Push>
              </TreeCell>
            </TreeRow>
          ))}
        </Tree>

        <Panel $top={1212}>
          <PanelTitle $pl={40}><Label w={124} color="#666">COMMENTS</Label></PanelTitle>
          <svg width="19" height="19" viewBox="0 0 19 19">
            <circle cx="9.500" cy="9.500" r="9.300" fill="#2d2d2d" />
            <path d="M4.500 9.500h10M9.500 4.500v10" stroke="#fff" strokeWidth="2.200" />
          </svg>
        </Panel>
        <NavIcons />
        <StatusIcons />
      </Canvas>

      <Timeline>
        <Transport $h={104}>
          <svg width="22" height="24" viewBox="0 0 22 24"><path d="M0 0h4v24H0zM22 1v23L4 12z" fill={INK} /></svg>
          <Push $ml={26}><svg width="26" height="24" viewBox="0 0 26 24"><path d="M20 0v24L0 12zM22 7h4v11h-4z" fill={INK} /></svg></Push>
          <Push $ml={26}><svg width="24" height="30" viewBox="0 0 24 30"><path d="M0 0l24 15L0 30z" fill={INK} /></svg></Push>
          <Push $ml={24}><svg width="26" height="24" viewBox="0 0 26 24"><path d="M6 0v24l20-12zM0 7h4v11H0z" fill={INK} /></svg></Push>
          <Push $ml={26}><svg width="22" height="24" viewBox="0 0 22 24"><path d="M18 0h4v24h-4zM0 0v24l18-12z" fill={INK} /></svg></Push>
          <Push $ml={34} $mt={-20}><TimelineTrack /></Push>
        </Transport>
        <Transport $h={102}>
          <GearIcon color="#757575" />
        </Transport>
      </Timeline>
    </Window>
  );
}
